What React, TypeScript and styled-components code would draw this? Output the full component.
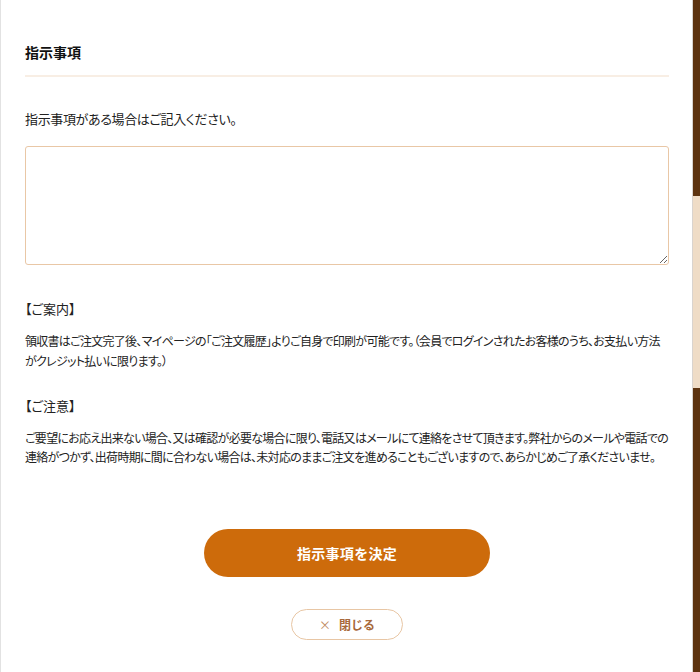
import React from "react";
import styled, { createGlobalStyle } from "styled-components";

const Global = createGlobalStyle`
  html, body { margin: 0; padding: 0; background: #ffffff; }
  body {
    font-family: "Noto Sans CJK JP", "Noto Sans", sans-serif;
    color: #222;
    -webkit-font-smoothing: antialiased;
  }
  * { box-sizing: border-box; }
`;

const Page = styled.div`
  display: flex;
  width: 700px;
  height: 672px;
  overflow: hidden;
`;

const Panel = styled.section`
  flex: 1;
  display: flex;
  flex-direction: column;
  background: #fff;
  border-left: 1px solid #e2e2e2;
  padding: 42px 23px 0 24px;
`;

const Strip = styled.div`
  width: 8px;
  display: flex;
  flex-direction: column;
  border-left: 1px solid #d9d4cf;
`;

const StripPart = styled.div<{ $h?: number; $tone: "dark" | "light" }>`
  ${(p) => (p.$h ? `height: ${p.$h}px;` : "flex: 1;")}
  background: ${(p) => (p.$tone === "dark" ? "#5e3410" : "#efdcc6")};
`;

const Title = styled.h2`
  margin: 0;
  font-size: 14px;
  font-weight: 700;
  line-height: 21px;
  color: #111;
  padding-bottom: 12px;
  border-bottom: 2px solid #f8eee4;
`;

const Lead = styled.p`
  margin: 32px 0 0;
  font-size: 13px;
  line-height: 20px;
  letter-spacing: -0.35px;
  font-feature-settings: "palt";
  color: #222;
`;

const Area = styled.textarea`
  display: block;
  margin-top: 17px;
  width: 100%;
  height: 119px;
  border: 1px solid #e9c7a6;
  border-radius: 3px;
  resize: vertical;
  font-family: inherit;
  font-size: 13px;
  padding: 8px;
  outline: none;
`;

const Heading = styled.h3<{ $top: number }>`
  margin: ${(p) => p.$top}px 0 0;
  font-size: 13px;
  font-weight: 400;
  line-height: 20px;
  font-feature-settings: "palt";
  color: #222;
`;

const Note = styled.p<{ $lh: number }>`
  margin: 12px 0 0;
  font-size: 12px;
  line-height: ${(p) => p.$lh}px;
  letter-spacing: -0.72px;
  white-space: nowrap;
  font-feature-settings: "palt";
  color: #222;
`;

const Actions = styled.div`
  display: flex;
  flex-direction: column;
  align-items: center;
  margin-top: 63px;
  gap: 32px;
`;

const Primary = styled.button`
  width: 286px;
  height: 48px;
  border: none;
  border-radius: 24px;
  background: #cd6b0b;
  color: #fff;
  font-family: inherit;
  font-size: 14px;
  font-weight: 700;
  letter-spacing: 0.02em;
  cursor: pointer;
`;

const Secondary = styled.button`
  width: 112px;
  height: 31px;
  border: 1px solid #e8c6a4;
  border-radius: 16px;
  background: #fff;
  color: #a8693a;
  font-family: inherit;
  font-size: 12px;
  font-weight: 700;
  display: flex;
  align-items: center;
  justify-content: center;
  gap: 8px;
  cursor: pointer;
`;

const Times = styled.span`
  font-weight: 400;
  font-size: 12px;
  color: #c08a5e;
`;

export default function App() {
  return (
    <>
      <Global />
      <Page>
        <Panel>
          <Title>指示事項</Title>
          <Lead>指示事項がある場合はご記入ください。</Lead>
          <Area />
          <Heading $top={34}>【ご案内】</Heading>
          <Note $lh={20}>
            領収書はご注文完了後、マイページの「ご注文履歴」よりご自身で印刷が可能です。（会員でログインされたお客様のうち、お支払い方法
            <br />
            がクレジット払いに限ります。）
          </Note>
          <Heading $top={25}>【ご注意】</Heading>
          <Note $lh={19}>
            ご要望にお応え出来ない場合、又は確認が必要な場合に限り、電話又はメールにて連絡をさせて頂きます。弊社からのメールや電話での
            <br />
            連絡がつかず、出荷時期に間に合わない場合は、未対応のままご注文を進めることもございますので、あらかじめご了承くださいませ。
          </Note>
          <Actions>
            <Primary type="button">指示事項を決定</Primary>
            <Secondary type="button">
              <Times>×</Times>閉じる
            </Secondary>
          </Actions>
        </Panel>
        <Strip>
          <StripPart $tone="dark" $h={196} />
          <StripPart $tone="light" $h={192} />
          <StripPart $tone="dark" />
        </Strip>
      </Page>
    </>
  );
}
